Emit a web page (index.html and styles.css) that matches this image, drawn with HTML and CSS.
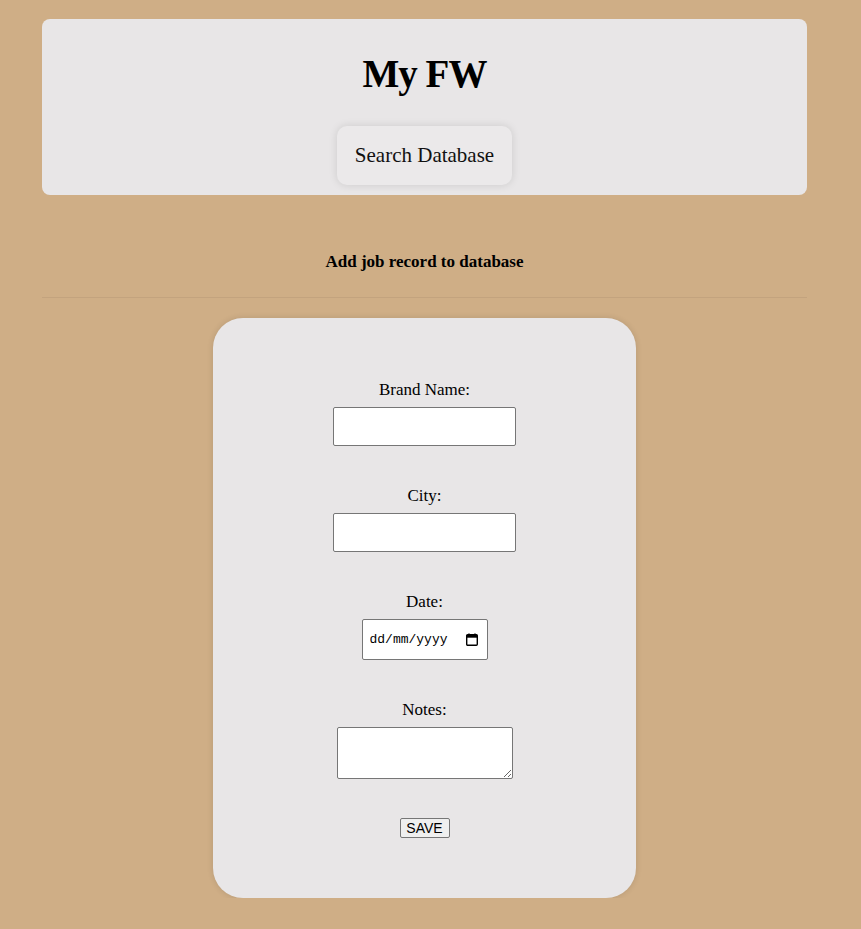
FILE: index.html
```html
<!DOCTYPE html>
<html lang="en-GB">
<head>
<meta charset="utf-8">
<title>My FW</title>
<link rel="stylesheet" href="styles.css">
</head>
<body>
<div class="page">
  <header class="header-card">
    <h1 class="title">My FW</h1>
    <button class="search-btn" type="button">Search Database</button>
  </header>
  <section class="add-section">
    <h3 class="add-title">Add job record to database</h3>
    <hr class="divider">
  </section>
  <form class="form-card">
    <div class="field field-brand">
      <label class="field-label" for="brand">Brand Name:</label>
      <input class="text-input" id="brand" type="text">
    </div>
    <div class="field field-city">
      <label class="field-label" for="city">City:</label>
      <input class="text-input" id="city" type="text">
    </div>
    <div class="field field-date">
      <label class="field-label" for="date">Date:</label>
      <div class="date-box">
        <input class="date-text" id="date" type="text" placeholder="dd/mm/yyyy">
        <svg class="cal-icon" width="12" height="13" viewBox="0 0 12 13" aria-hidden="true">
          <path d="M3 0.5v2M9 0.5v2" stroke="#000" stroke-width="1.4" fill="none"/>
          <rect x="0.7" y="1.7" width="10.6" height="10.6" rx="1" fill="none" stroke="#000" stroke-width="1.4"/>
          <rect x="0.7" y="1.7" width="10.6" height="3" fill="#000"/>
        </svg>
      </div>
    </div>
    <div class="field field-notes">
      <label class="field-label" for="notes">Notes:</label>
      <textarea class="notes-input" id="notes"></textarea>
    </div>
    <button class="save-btn" type="button">SAVE</button>
  </form>
</div>
</body>
</html>
```
FILE: styles.css
```css
html, body {
  margin: 0;
  padding: 0;
}
body {
  background: #cfae86;
  font-family: "Liberation Serif", "DejaVu Serif", serif;
  color: #000;
}
.page {
  width: 765px;
  margin: 19px 0 0 42px;
  display: flex;
  flex-direction: column;
  align-items: center;
}
.header-card {
  width: 100%;
  box-sizing: border-box;
  background: #e8e6e7;
  border-radius: 8px;
  display: flex;
  flex-direction: column;
  align-items: center;
  padding: 32px 0 10px;
}
.title {
  margin: 0;
  font-size: 39px;
  letter-spacing: -1px;
  font-weight: bold;
  line-height: 46px;
}
.search-btn {
  margin-top: 29px;
  height: 59px;
  padding: 0 18px;
  border: none;
  border-radius: 10px;
  background: #ebe9ea;
  box-shadow: 0 0 8px rgba(0, 0, 0, 0.12);
  font-family: "Liberation Serif", "DejaVu Serif", serif;
  font-size: 21px;
  color: #111;
}
.add-section {
  width: 100%;
  display: flex;
  flex-direction: column;
  align-items: center;
}
.add-title {
  margin: 57px 0 0;
  font-size: 17px;
  line-height: 20px;
  font-weight: bold;
}
.divider {
  width: 100%;
  margin: 25px 0 0;
  border: none;
  border-top: 1px solid #c3a37e;
  height: 0;
}
.form-card {
  margin: 20px 0 0;
  width: 423px;
  box-sizing: border-box;
  background: #e8e6e7;
  border-radius: 30px;
  box-shadow: 0 0 6px rgba(0, 0, 0, 0.12);
  padding: 62px 0 60px;
  display: flex;
  flex-direction: column;
  align-items: center;
}
.field {
  display: flex;
  flex-direction: column;
  align-items: center;
  gap: 8px;
}
.field-city {
  margin-top: 40px;
}
.field-date {
  margin-top: 40px;
}
.field-notes {
  margin-top: 40px;
}
.field-label {
  font-size: 17px;
  line-height: 19px;
}
.text-input {
  width: 183px;
  height: 39px;
  box-sizing: border-box;
  border: 1px solid #767676;
  border-radius: 2px;
  background: #fff;
  margin: 0;
}
.date-box {
  width: 126px;
  height: 41px;
  box-sizing: border-box;
  border: 1px solid #767676;
  border-radius: 2px;
  background: #fff;
  display: flex;
  align-items: center;
  padding: 0 9px 0 7px;
  gap: 4px;
}
.date-text {
  flex: 1;
  min-width: 0;
  border: none;
  outline: none;
  padding: 0;
  margin: 0;
  background: transparent;
  font-family: "Liberation Mono", "DejaVu Sans Mono", monospace;
  font-size: 13px;
  color: #000;
}
.date-text::placeholder {
  color: #000;
  opacity: 1;
}
.cal-icon {
  flex: none;
  display: block;
}
.notes-input {
  width: 176px;
  height: 52px;
  box-sizing: border-box;
  border: 1px solid #767676;
  border-radius: 2px;
  background: #fff;
  margin: 0;
  resize: both;
}
.save-btn {
  margin-top: 39px;
  width: 50px;
  height: 20px;
  box-sizing: border-box;
  padding: 0;
  border: 1px solid #767676;
  border-radius: 2px;
  background: #efefef;
  font-family: "Liberation Sans", Arial, sans-serif;
  font-size: 14px;
  color: #000;
}
```
